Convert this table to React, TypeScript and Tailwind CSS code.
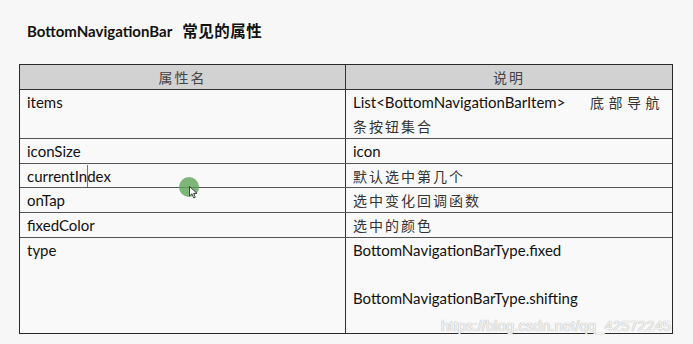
import React from 'react';

const LATIN = "font-['Lato','Noto_Sans_CJK_SC',sans-serif]";
const CJK = "font-['Noto_Sans_CJK_SC',sans-serif] text-[14px] tracking-[2px] text-[#333]";

type Row = { name: React.ReactNode; desc: React.ReactNode; h: string };

function Cjk({ children }: { children: React.ReactNode }) {
  return <span className={CJK}>{children}</span>;
}

const ROWS: Row[] = [
  {
    name: 'items',
    desc: (
      <>
        <div className="flex h-6 justify-between">
          <span>List&lt;BottomNavigationBarItem&gt;</span>
          <span className="font-['Noto_Sans_CJK_SC',sans-serif] text-[14px] tracking-[4.5px] text-[#333]">
            底部导航
          </span>
        </div>
        <div className="h-6">
          <Cjk>条按钮集合</Cjk>
        </div>
      </>
    ),
    h: 'h-[49px]',
  },
  { name: 'iconSize', desc: 'icon', h: 'h-[25px]' },
  {
    name: (
      <span className="relative">
        currentIn
        <span className="absolute top-[-2px] h-[24px] w-px bg-[#777]" />
        dex
      </span>
    ),
    desc: <Cjk>默认选中第几个</Cjk>,
    h: 'h-[24px]',
  },
  { name: 'onTap', desc: <Cjk>选中变化回调函数</Cjk>, h: 'h-[25px]' },
  { name: 'fixedColor', desc: <Cjk>选中的颜色</Cjk>, h: 'h-[25px]' },
  {
    name: 'type',
    desc: (
      <>
        <div className="h-6">BottomNavigationBarType.fixed</div>
        <div className="h-6" />
        <div className="h-6">BottomNavigationBarType.shifting</div>
      </>
    ),
    h: 'h-[95px]',
  },
];

export default function App() {
  return (
    <div className={`relative h-[344px] w-[693px] overflow-hidden bg-[#f7f7f7] text-[#111] ${LATIN}`}>
      <h1 className="flex h-[22px] items-baseline pl-[27px] mt-[19px] text-[15px] font-bold leading-[22px] text-[#111]">
        <span>BottomNavigationBar</span>
        <span className="ml-[10px] font-['Noto_Sans_CJK_SC',sans-serif] text-[15.5px] tracking-[0.5px]">
          常见的属性
        </span>
      </h1>

      <div className="ml-[19px] mt-[23px] w-[654px] border border-[#2a2a2a] text-[15px] leading-6">
        <div className="grid h-[25px] grid-cols-[326px_1fr] border-b border-[#333] bg-[#d2d2d2] text-center">
          <div className="border-r border-[#333]">
            <span className="font-['Noto_Sans_CJK_SC',sans-serif] text-[14px] tracking-[2px] text-[#444]">
              属性名
            </span>
          </div>
          <div>
            <span className="font-['Noto_Sans_CJK_SC',sans-serif] text-[14px] tracking-[2px] text-[#444]">
              说明
            </span>
          </div>
        </div>
        <div className="bg-[#f9f9f9]">
          {ROWS.map((r, i) => (
            <div
              key={i}
              className={`grid grid-cols-[326px_1fr] overflow-hidden ${r.h} ${i < ROWS.length - 1 ? 'border-b border-[#555]' : ''}`}
            >
              <div className="border-r border-[#333] pl-[7px]">{r.name}</div>
              <div className="pl-[7px] pr-[8px]">{r.desc}</div>
            </div>
          ))}
        </div>
      </div>

      {/* mouse highlight + pointer */}
      <div className="absolute left-[179px] top-[177px] h-[20px] w-[20px] rounded-full bg-[#5fa55a]/80" />
      <svg className="absolute left-[189px] top-[186px]" width="9" height="13" viewBox="0 0 9 13">
        <path d="M0.5 0.5 L0.5 10 L3 7.8 L4.8 12 L6.3 11.3 L4.6 7.3 L8 7.3 Z" fill="#fff" stroke="#222" strokeWidth="0.8" />
      </svg>

      {/* watermark */}
      <div
        className="absolute left-[441px] top-[315px] font-['Liberation_Sans',sans-serif] text-[15px] text-[#f4f4f4]"
        style={{ textShadow: '0 0 1px #b5b5b5, 0 0 1px #b5b5b5' }}
      >
        https://blog.csdn.net/qq_42572245
      </div>
    </div>
  );
}
